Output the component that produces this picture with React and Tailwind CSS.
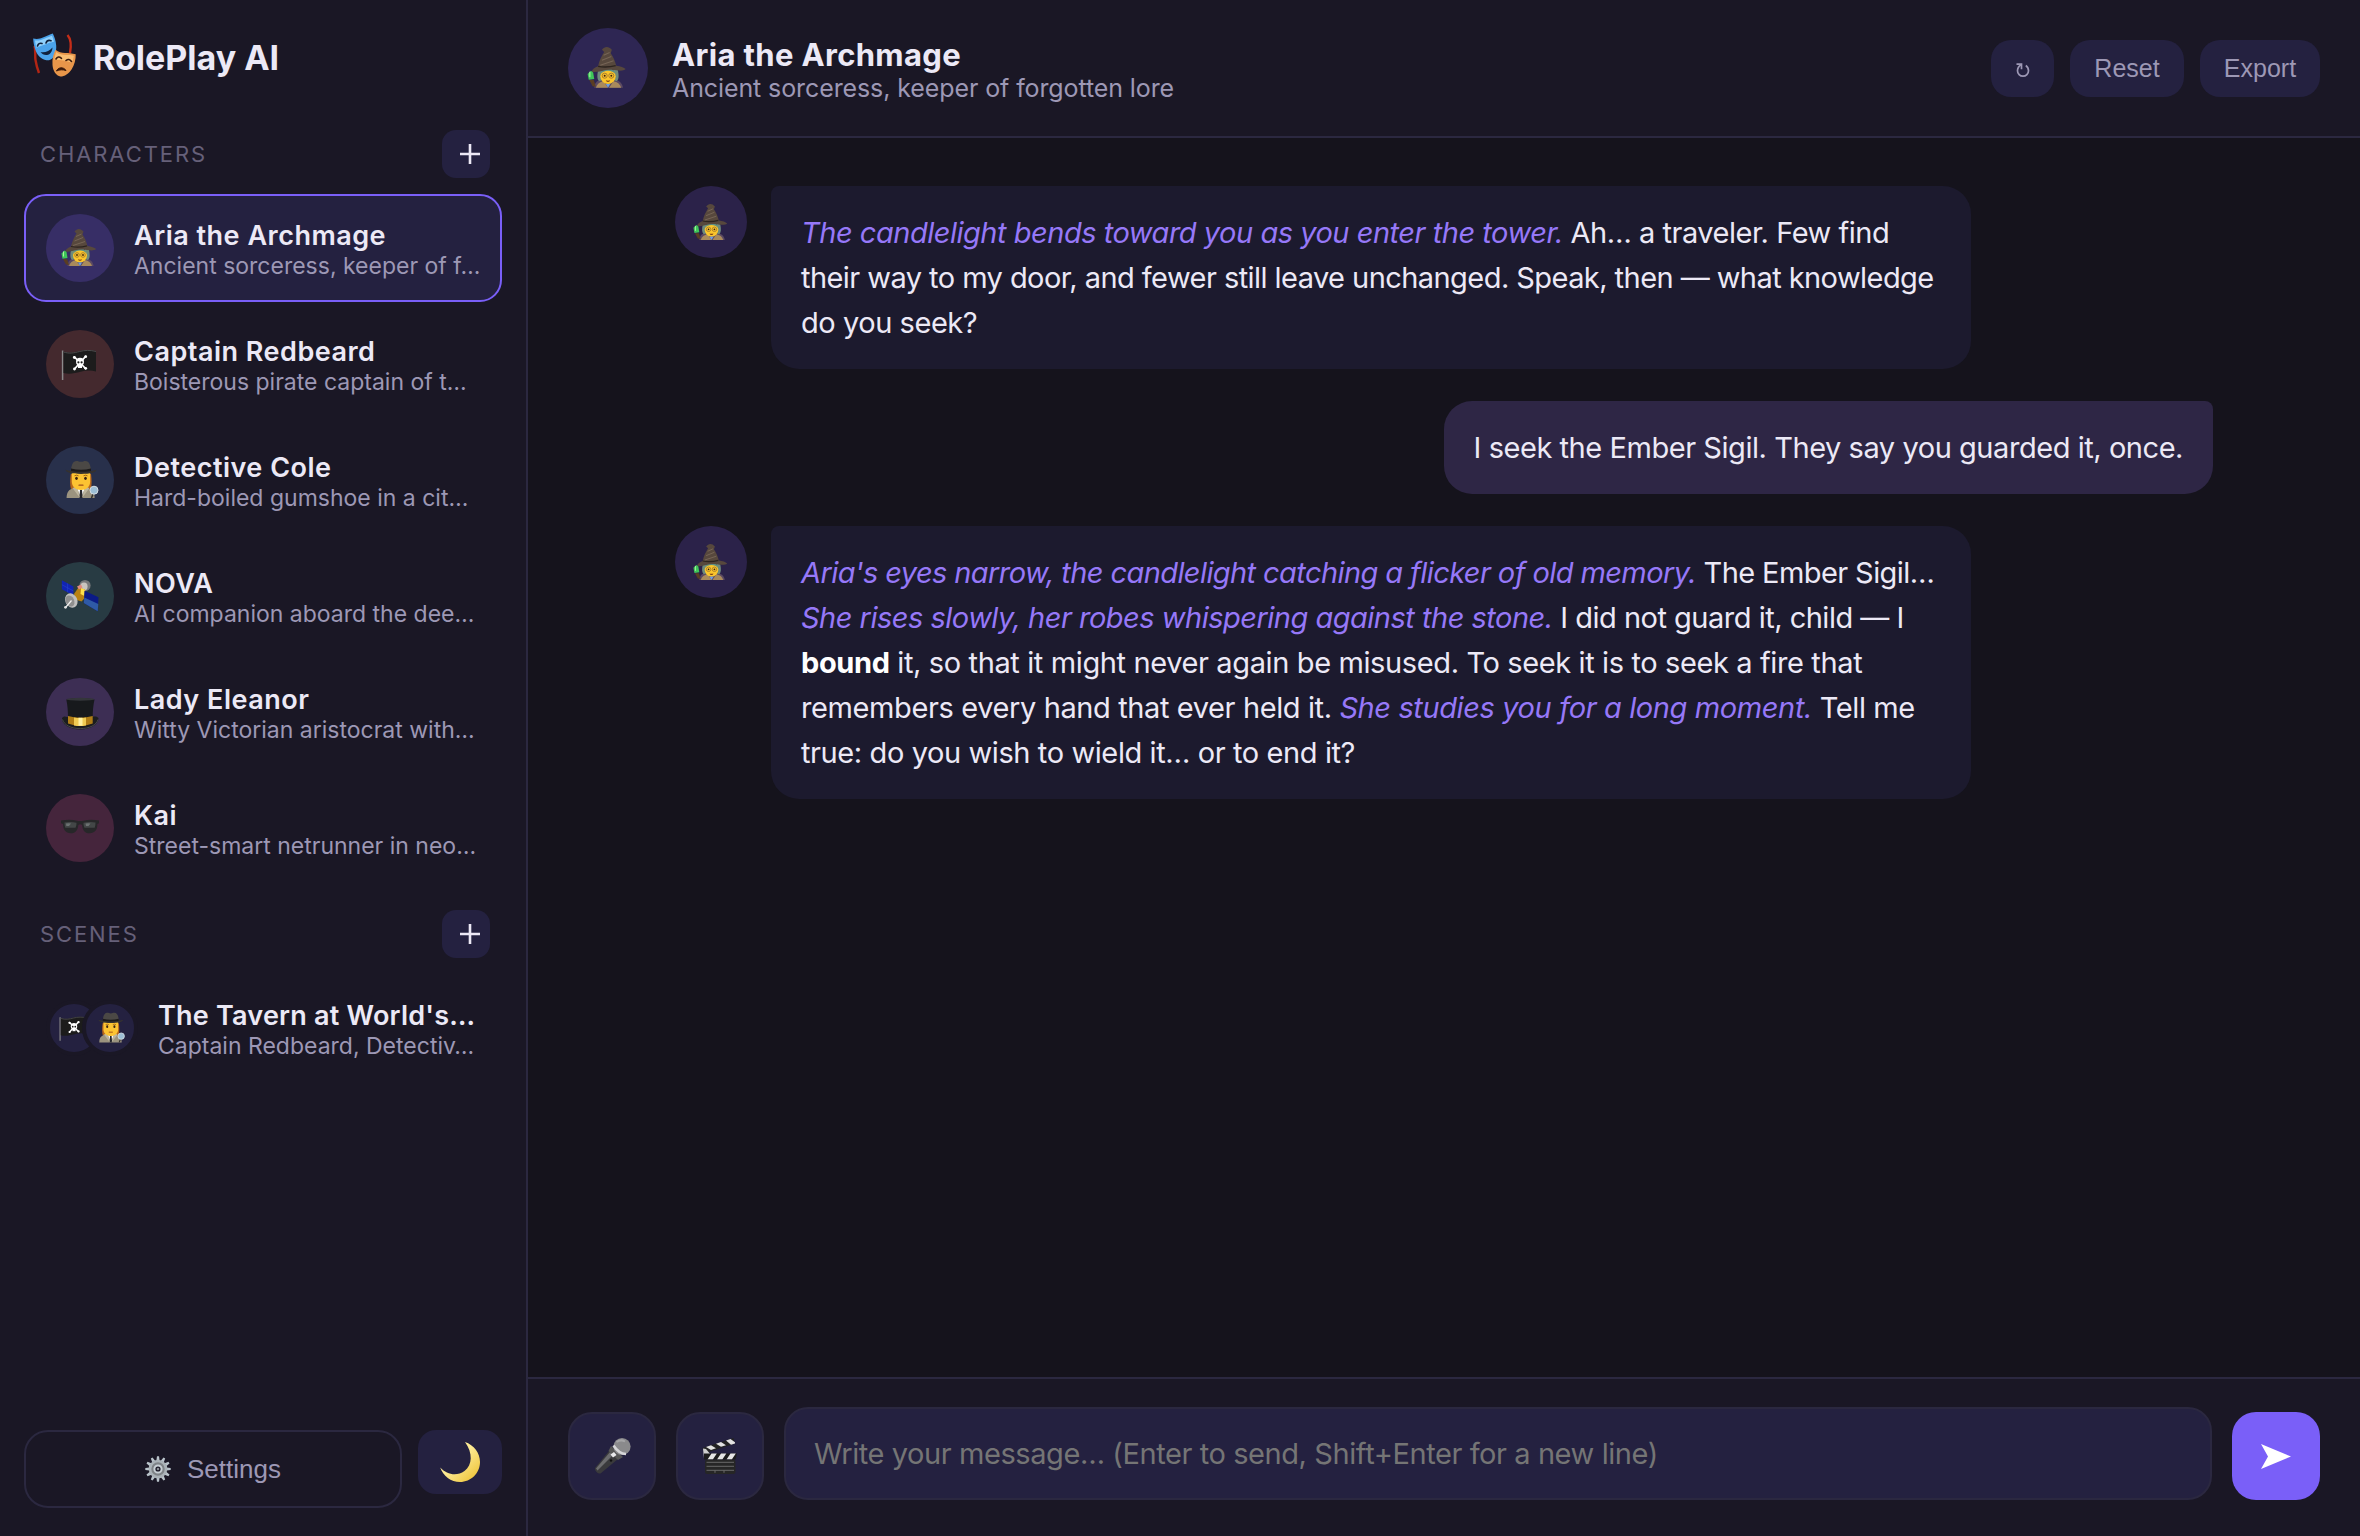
import React from 'react';
import clsx from 'clsx';

function Wizard({ className }) {
    return (
        <svg viewBox="0 0 40 40" className={className}>
            <path d="M7.500 38c.4-5 3-7.200 7-7.600h10.500c5 .6 8 3 8.600 7.600z" fill="#5b4a63" />
            <path d="M9 38c1-3.500 3.500-5.500 7-6l4 6zM32 38c-1-3.500-3.500-5.500-7-6l-4 6z" fill="#a98a5c" />
            <path d="M11 22c-1 5-1 8 1 10l3-1V21zM29 22c1 5 1 8-1 10l-3-1V21z" fill="#6f8b7b" />
            <circle cx="20" cy="27.500" r="7" fill="#fbc62b" />
            <path d="M13 26c1-4 4-6 7-6s6 2 7 6c-2-2.500-4-3.500-7-3.500s-5 1-7 3.500z" fill="#5d8f85" />
            <g fill="none" stroke="#a0742c" strokeWidth=".8">
                <circle cx="17" cy="27" r="2.300" />
                <circle cx="23" cy="27" r="2.300" />
            </g>
            <circle cx="17" cy="27" r=".9" fill="#3b2410" />
            <circle cx="23" cy="27" r=".9" fill="#3b2410" />
            <path d="M18 31.200q2 .9 4 0q-.4 1.600-2 1.600t-2-1.600z" fill="#7d3f12" />
            <path d="M18 34.500h4l-2 3.500z" fill="#6f9fe0" />
            <path d="M14.500 3.500C17 .2 20.500 0 23.500 3.500l-1 3c2.500 3.500 4 7.500 5 11.500 4 .5 7 1.500 8.600 3-3 2.500-7 1-13 .6-7-.4-12 3-18 1.900C5.500 21.500 8 19.500 11 18.500c1-5 3-9 5.500-13z" fill="#57483d" />
            <path d="M16 8.500l5.500-2.500M14.500 13l8.500-3.500M13 17.500l12-4" stroke="#766556" strokeWidth="1" />
            <path d="M11 18.500q8 1.500 16-.7" stroke="#2d241e" strokeWidth="1.200" fill="none" />
            <path d="M4.500 22.500l2 1.500 1 6-5 .7-1-5.200z" fill="#3fc659" />
            <path d="M3.500 23.500v5" stroke="#a7f3a0" strokeWidth="1" />
            <path d="M3 31h4l2 6-3-.5z" fill="#5a3d22" />
        </svg>
    );
}

function PirateFlag({ className }) {
    return (
        <svg viewBox="0 0 40 40" className={className}>
            <path d="M2.600 6.500V36" stroke="#8b8b8b" strokeWidth="1.500" />
            <path d="M3.500 7.500c6 2 11 .8 16-.5s11-1.600 16.500 0v20.500c-5-1.600-10-1.300-15.500.2S9.500 30.500 3.500 29z" fill="#1c1c1c" />
            <path d="M3.500 8c6 2 11 .8 16-.5s11-1.600 16.500 0" stroke="#4b4b4b" strokeWidth="1" fill="none" />
            <path d="M14.500 13l11 11.500M25.500 12.500L14.500 25" stroke="#fff" strokeWidth="1.800" strokeLinecap="round" />
            <g fill="#fff">
                <circle cx="14.300" cy="13.500" r="1.400" />
                <circle cx="25.700" cy="12.700" r="1.400" />
                <circle cx="14.500" cy="25" r="1.400" />
                <circle cx="25.700" cy="24.300" r="1.400" />
                <ellipse cx="20" cy="17.800" rx="4" ry="4" />
                <path d="M18 21h4v3h-4z" />
            </g>
            <circle cx="18.400" cy="18.300" r="1.100" fill="#1c1c1c" />
            <circle cx="21.600" cy="18.300" r="1.100" fill="#1c1c1c" />
        </svg>
    );
}

function Detective({ className }) {
    return (
        <svg viewBox="0 0 40 40" className={className}>
            <path d="M10.800 14c-1 6-.8 11 0 14.500L15 31h12l4-2.500c.8-4 .8-9 0-14.500z" fill="#b5651d" />
            <path d="M6.600 38c0-5.500 2-8.500 7-10h14c5 1.500 7 4.500 7 10z" fill="#9b937f" />
            <path d="M17 28h8l-4 10z" fill="#fff" />
            <path d="M20 30h2l.7 8h-3.400z" fill="#26262c" />
            <path d="M12.500 28l4.500-1.500 3 11.500zM29.500 28L25 26.500 22 38z" fill="#bdb59e" />
            <path d="M11.800 12h18.400v9.500c0 5-4 8.500-9.200 8.500s-9.200-3.500-9.200-8.500z" fill="#fcc332" />
            <ellipse cx="16.500" cy="18.300" rx="1.300" ry="1.600" fill="#3a2412" />
            <ellipse cx="25.500" cy="18.300" rx="1.300" ry="1.600" fill="#3a2412" />
            <path d="M14.500 15.800q2-1.200 4 0M23.500 15.800q2-1.200 4 0" stroke="#8b4c12" strokeWidth=".8" fill="none" />
            <path d="M19 25.200h4" stroke="#a0521a" strokeWidth="1.200" strokeLinecap="round" />
            <path d="M11 11c.2-6 2-10 5.500-10 2 0 2.500.8 4.500.8s2.500-.8 4.500-.8c3.500 0 5.300 4 5.500 10z" fill="#4b4845" />
            <path d="M11 8.500q10 2.500 20 0v3.500q-10 2-20 0z" fill="#1d1b1b" />
            <path d="M5.600 9.800c4 1.500 9 2 15.400 2s11.400-.5 15.400-2c-.5 3-6 4.100-15.400 4.100S6 12.800 5.600 9.800z" fill="#35322f" />
            <path d="M33 34l-1.500 4" stroke="#35322f" strokeWidth="1.500" />
            <circle cx="34" cy="30.200" r="4" fill="#9dbfd6" stroke="#d5dde2" strokeWidth="1" />
        </svg>
    );
}

function Satellite({ className }) {
    return (
        <svg viewBox="0 0 40 40" className={className}>
            <circle cx="25" cy="9.500" r="5.600" fill="#77797b" />
            <ellipse cx="24" cy="10.500" rx="3.600" ry="4" fill="#c9c5bf" />
            <path d="M1.900 4.200l11.500 6.300v9L1.900 13.300z" fill="#1124b4" />
            <path d="M1.900 8.700l11.500 6.300M7.600 7.400v9" stroke="#2d4bd0" strokeWidth=".5" />
            <path d="M14 18l4.500-6.500 6.500 2 1 7-4.500 5-6-2z" fill="#b98212" />
            <path d="M21 12l4 1.700-1 6-3.500-1.700z" fill="#ffe04a" />
            <path d="M17 10.500l4-2 1.500 3-3.500 2z" fill="#e08a80" />
            <path d="M24.500 14.700l14 6.600-.8 14L23.800 27z" fill="#0b1a86" />
            <path d="M24.300 21.500l14 6.500-.6 7.300-13.900-8.300z" fill="#2f5aa6" />
            <ellipse cx="11.300" cy="24.500" rx="6" ry="7.500" transform="rotate(-25 11.300 24.500)" fill="#bfbfbf" />
            <ellipse cx="10" cy="25" rx="4.200" ry="5.800" transform="rotate(-25 10 25)" fill="#8f8f8f" />
            <path d="M11.500 24.500l-6 7" stroke="#f3f3f3" strokeWidth="1.200" />
            <circle cx="5.500" cy="31.300" r="1.400" fill="#dedede" />
        </svg>
    );
}

function TopHat({ className }) {
    return (
        <svg viewBox="0 0 40 40" className={className}>
            <path d="M2 26c1-1.500 3-2 5-1l26-.2c2-.8 4.500-.3 5.500 1.200C39 32 31 37.500 20.300 37.500S1 32 2 26z" fill="#1c1d1f" />
            <path d="M2.500 27.500C4 33 11 36.600 20.300 36.600S36.500 33 38 27.500" stroke="#505254" strokeWidth=".8" fill="none" />
            <path d="M6.300 7.500Q20 5 34.500 7.500c-1.300 6-1.800 12-1.800 18H8c0-6-.4-12-1.700-18z" fill="#17191c" />
            <ellipse cx="20.400" cy="7.300" rx="14" ry="1.500" fill="#34363a" />
            <path d="M8 24q12.300 3.500 24.700 0v7.500Q20.300 36 8 31.500z" fill="#b07d16" />
            <path d="M14 25.400q6 1 12 0v8q-6 1-12 0z" fill="#f0cb52" />
            <path d="M18.500 25.700h4v8h-4z" fill="#fff0a0" />
        </svg>
    );
}

function Shades({ className }) {
    return (
        <svg viewBox="0 0 40 40" className={className}>
            <path d="M1 12.500q9-1.500 16 .2 3.200.8 6.400 0 7-1.700 15.600-.2v2.800l-1.600.8c0 6-2.500 9.200-7.900 9.200-5 0-7-3.300-7.400-8.300q-1.900-1.400-3.800 0c-.4 5-2.600 8.300-7.400 8.300-5.400 0-7.700-3.200-7.900-9.200L1 15.300z" fill="#272729" />
            <path d="M4.500 14.500q6-1 12 .3c0 2-.3 3.500-1 5H5.300c-.6-1.600-.8-3.300-.8-5.300zM23.500 14.800q6-1.300 12-.3c0 2-.2 3.700-.8 5.300H24.500c-.7-1.500-1-3-1-5z" fill="#434747" />
            <path d="M6 15.500q3-.6 5 0l-2 2.500H6.300zM25.500 15.500q3-.6 5 0l-2 2.500H26z" fill="#6c7272" />
        </svg>
    );
}

function Masks({ className }) {
    return (
        <svg viewBox="0 0 44 44" className={className}>
            <path d="M1.500 13c1.500 5 .2 9 1 14s1.500 8 3.500 13" stroke="#b32514" strokeWidth="2.400" fill="none" />
            <path d="M34.500 2c3.500 4 4 10 2.500 18" stroke="#c42d18" strokeWidth="2.400" fill="none" />
            <path d="M.2 5.500C4 6.300 7 5.800 10.500 4.300S17 1.500 19.800.5c1.500 3 3 7 3.400 12 .5 7-2.200 13.500-7.200 14.800C10.500 27.500 5.500 24.500 3 18.500 1.200 14 .3 9.500.2 5.500z" fill="#4ba3ea" />
            <path d="M2 7.500c4 .3 7-.7 10-2s5-2 7-2.700c1 2 1.500 4 2 6-6 1-12 4-17.500 6-.8-2.500-1.300-5-1.500-7.300z" fill="#8fd0fb" />
            <path d="M4.500 13q1-3.500 4.500-2.500M13 10q1.200-3.500 5-2.300" stroke="#10223d" strokeWidth="1.600" fill="none" strokeLinecap="round" />
            <path d="M7.500 19c4.500.8 9-.8 12-4.500-.2 4-2.200 7-5.500 7.500-2.800.3-5-1-6.500-3z" fill="#10223d" />
            <path d="M22.500 16.800c3 2.300 6 3.200 9.500 3.200s7 .3 10.700 1.200c.2 5-1.200 10.500-4 15S31.500 43.500 27.500 43.500c-4.500-1-7.500-5.500-8-11.500-.4-5.500.8-11 3-15.200z" fill="#e8964a" />
            <path d="M23.300 19c3 2.300 6 3 9.500 3s5 0 8 .8c-.3 3-1 5-2 7-5-2-11-3-17.500-3 .3-3 1-5.500 2-7.800z" fill="#f9bd72" />
            <path d="M23 26q2-3.500 5.500-.7M33 27.500q3-2.500 5.500 1" stroke="#3b1a0b" strokeWidth="1.600" fill="none" strokeLinecap="round" />
            <path d="M23.500 38c1.500-3.800 7-4.500 9.500-.5-3-1-6.500-1-9.500.5z" fill="#3b1a0b" stroke="#3b1a0b" strokeWidth="1" strokeLinejoin="round" />
        </svg>
    );
}

const teeth = [0, 30, 60, 90, 120, 150, 180, 210, 240, 270, 300, 330];

function Gear({ className }) {
    return (
        <svg viewBox="0 0 26 26" className={className}>
            {teeth.map((deg) => (
                <path key={deg} d="M11.400 4.500l.6-4.200h2l.6 4.200z" fill="#b9c3ca" transform={`rotate(${deg} 13 13)`} />
            ))}
            <circle cx="13" cy="13" r="8" fill="#7f8488" stroke="#aab2b7" strokeWidth="2.600" />
            <circle cx="13" cy="13" r="3.600" fill="#1a1725" stroke="#c8d0d5" strokeWidth="2" />
            <circle cx="13" cy="13" r="1.300" fill="#8a8f94" />
        </svg>
    );
}

function Moon({ className }) {
    return (
        <svg viewBox="0 0 40 40" className={className}>
            <defs>
                <linearGradient id="moon" x1="0" y1="0" x2="1" y2="1">
                    <stop offset=".45" stopColor="#fdea94" />
                    <stop offset=".85" stopColor="#f0c945" />
                </linearGradient>
            </defs>
            <path d="M25 0C34 3 40 11 40 20c0 11-9 20-20 20C11 40 3 34 .2 25.500c6.800 7.500 16.800 9 24.300 3.500C32.500 23 33 11 25 0z" fill="url(#moon)" />
        </svg>
    );
}

function Mic({ className }) {
    return (
        <svg viewBox="0 0 40 40" className={className}>
            <path d="M17.500 14.500l8.500 8.500L8.500 37.500Q6.500 38 4.500 36T3 32z" fill="#3a3a3c" />
            <path d="M18.500 15.500l3 3L5.500 34.500l-1.500-2z" fill="#6c6c6e" />
            <path d="M19 10l12 11-5 3-9.500-9z" fill="#555" />
            <circle cx="30" cy="10.500" r="8.600" fill="#8a8a8c" />
            <path d="M21.500 9.500Q27 18 34 18" stroke="#d6d6d8" strokeWidth="2.600" fill="none" />
            <path d="M24.500 6Q29 3 33 5.500" stroke="#a5a5a7" strokeWidth="2" fill="none" />
            <path d="M18.500 18.500l3.500-2.500 2.500 3-3.500 2.500z" fill="#e8e8ea" />
            <circle cx="19" cy="24.500" r="1.200" fill="#111" />
        </svg>
    );
}

function Clapper({ className }) {
    return (
        <svg viewBox="0 0 40 40" className={className}>
            <path d="M2.500 12L33.500 2l1.500 5.500L4.500 17.500z" fill="#232323" />
            <path d="M6 11l5-1.700 5 3-5 1.700zM16 7.700l5-1.700 5 3.300-5 1.500zM26 4.500l4.500-1.500 4.500 3.200v1.300l-4 1.200z" fill="#e2e2e2" />
            <path d="M3 12.500l3 .5 5 6-7 3.500z" fill="#cfcfcf" />
            <path d="M4 17.500h33l-1.500 6H4z" fill="#1b1b1b" />
            <path d="M11.500 17.500h5.300l-4 6H7.500zM21 17.500h5.300l-4 6H17zM30.500 17.500h5.300l-4 6h-5.300z" fill="#e6e6e6" />
            <rect x="5" y="23.500" width="30.500" height="14.500" rx="2" fill="#262626" />
            <path d="M6.500 26.300h27.500M6.500 30.300h27.500M6.500 34.300h27.500M15 34.300v2.500M24 34.300v2.500" stroke="#6a6a6a" strokeWidth="1" />
        </svg>
    );
}

const characters = [
    { name: 'Aria the Archmage', tagline: 'Ancient sorceress, keeper of f…', Icon: Wizard, color: 'bg-[#372e66]', active: true },
    { name: 'Captain Redbeard', tagline: 'Boisterous pirate captain of t…', Icon: PirateFlag, color: 'bg-[#44292e]' },
    { name: 'Detective Cole', tagline: 'Hard-boiled gumshoe in a cit…', Icon: Detective, color: 'bg-[#28304b]' },
    { name: 'NOVA', tagline: 'AI companion aboard the dee…', Icon: Satellite, color: 'bg-[#283b43]' },
    { name: 'Lady Eleanor', tagline: 'Witty Victorian aristocrat with…', Icon: TopHat, color: 'bg-[#3d2e54]' },
    { name: 'Kai', tagline: 'Street-smart netrunner in neo…', Icon: Shades, color: 'bg-[#45253c]' },
];

function SectionHeader({ title }) {
    return (
        <div className="flex h-12 items-center justify-between pr-3 pl-4">
            <h2 className="text-[22px] tracking-[1.9px] text-[#666079] uppercase">{title}</h2>
            <button className="flex size-12 items-center justify-center rounded-[14px] bg-[#242140] pl-2">
                <svg viewBox="0 0 20 20" className="size-5" stroke="#ece9f6" strokeWidth="2.600">
                    <path d="M10 0v20M0 10h20" />
                </svg>
            </button>
        </div>
    );
}

function CardText({ name, tagline, tracking = 'tracking-[0.5px]' }) {
    return (
        <div className="pt-0.5 whitespace-nowrap">
            <p className={clsx('text-[27px] leading-[34px] font-semibold text-[#ece9f6]', tracking)}>{name}</p>
            <p className="text-[23px] leading-[26px] text-[#9d98b5]">{tagline}</p>
        </div>
    );
}

function Sidebar() {
    return (
        <aside className="flex w-[528px] shrink-0 flex-col border-r-2 border-[#2b2840] bg-[#1a1725] px-6 pb-7">
            <div className="mb-5 flex h-[110px] items-center gap-4 pl-[9px]">
                <Masks className="size-11" />
                <h1 className="pt-1 text-[34px] font-bold text-[#ece9f6]">RolePlay AI</h1>
            </div>
            <SectionHeader title="Characters" />
            <div className="mt-4 mb-7 flex flex-col gap-2">
                {characters.map(({ name, tagline, Icon, color, active }) => (
                    <div
                        key={name}
                        className={clsx(
                            'flex h-[108px] items-center gap-5 rounded-[22px] border-2 px-5',
                            active ? 'border-[#7a5ff8] bg-[#242140]' : 'border-transparent'
                        )}
                    >
                        <div className={clsx('flex size-[68px] shrink-0 items-center justify-center rounded-full', color)}>
                            <Icon className="size-10" />
                        </div>
                        <CardText name={name} tagline={tagline} />
                    </div>
                ))}
            </div>
            <SectionHeader title="Scenes" />
            <div className="mt-4 flex h-[108px] items-center gap-5 pl-[22px]">
                <div className="flex shrink-0 -space-x-5">
                    <div className="flex size-14 items-center justify-center rounded-full border-4 border-[#1a1725] bg-[#242140]">
                        <PirateFlag className="size-8" />
                    </div>
                    <div className="flex size-14 items-center justify-center rounded-full border-4 border-[#1a1725] bg-[#242140]">
                        <Detective className="size-8" />
                    </div>
                </div>
                <CardText name="The Tavern at World's…" tagline="Captain Redbeard, Detectiv…" tracking="tracking-[0.22px]" />
            </div>
            <div className="mt-auto flex items-start gap-4">
                <button className="flex h-[78px] w-[378px] items-center justify-center gap-4 rounded-[24px] border-2 border-[#2b2840] font-['Liberation_Sans',sans-serif] text-[26px] text-[#9d98b5]">
                    <Gear className="size-[26px]" />
                    Settings
                </button>
                <button className="flex h-16 w-[84px] items-center justify-center rounded-[18px] bg-[#242140]">
                    <Moon className="size-10" />
                </button>
            </div>
        </aside>
    );
}

function ChatHeader() {
    return (
        <header className="flex h-[138px] shrink-0 items-center border-b-2 border-[#2b2840] bg-[#1a1725] px-10">
            <div className="flex size-20 items-center justify-center rounded-full bg-[#2e2653]">
                <Wizard className="size-11" />
            </div>
            <div className="ml-6 pt-px whitespace-nowrap">
                <p className="text-[31px] leading-[39px] font-bold tracking-[0.35px] text-[#ece9f6]">Aria the Archmage</p>
                <p className="text-[25px] leading-7 tracking-[-0.1px] text-[#9d98b5]">Ancient sorceress, keeper of forgotten lore</p>
            </div>
            <div className="ml-auto flex gap-4 font-['Liberation_Sans',sans-serif] text-[25px] text-[#9d98b5]">
                <button className="flex h-[57px] w-[63px] items-center justify-center rounded-[20px] bg-[#242140] pt-1">
                    <svg viewBox="0 0 14 16" className="h-4 w-3.5" fill="none" stroke="#9d98b5" strokeWidth="1.700">
                        <path d="M.5 2.200h5v5M5.300 2.400C2.600 4 1.500 6 1.500 8.700a5.500 5.500 0 0 0 11 0c0-2.300-1-4-2.700-5.200" />
                    </svg>
                </button>
                <button className="h-[57px] w-[114px] rounded-[20px] bg-[#242140] pt-0.5">Reset</button>
                <button className="h-[57px] w-[120px] rounded-[20px] bg-[#242140] pt-0.5">Export</button>
            </div>
        </header>
    );
}

function Action({ children }) {
    return <em className="text-[#9678f8]">{children}</em>;
}

function BotMessage({ children }) {
    return (
        <div className="flex items-start gap-6">
            <div className="flex size-[72px] shrink-0 items-center justify-center rounded-full bg-[#2b2249]">
                <Wizard className="size-[39px]" />
            </div>
            <div className="w-[1200px] rounded-[28px] rounded-tl-lg bg-[#1c1a2e] px-[30px] py-6 whitespace-nowrap">{children}</div>
        </div>
    );
}

function Messages() {
    return (
        <div className="mx-auto flex w-[1538px] grow flex-col gap-8 pt-12 text-[29px] leading-[45px] tracking-[-0.45px] text-[#ece9f6]">
            <BotMessage>
                <p className="tracking-[-0.48px]">
                    <Action>The candlelight bends toward you as you enter the tower.</Action> Ah… a traveler. Few find
                </p>
                <p className="tracking-[-0.56px]">their way to my door, and fewer still leave unchanged. Speak, then — what knowledge</p>
                <p>do you seek?</p>
            </BotMessage>
            <div className="self-end rounded-[28px] rounded-tr-lg bg-[#2e2645] px-[30px] py-6">
                I seek the Ember Sigil. They say you guarded it, once.
            </div>
            <BotMessage>
                <p className="tracking-[-0.59px]">
                    <Action>Aria's eyes narrow, the candlelight catching a flicker of old memory.</Action> The Ember Sigil…
                </p>
                <p className="tracking-[-0.5px]">
                    <Action>She rises slowly, her robes whispering against the stone.</Action> I did not guard it, child — I
                </p>
                <p className="tracking-[-0.38px]">
                    <strong className="font-bold text-white">bound</strong> it, so that it might never again be misused. To
                    seek it is to seek a fire that
                </p>
                <p className="tracking-[-0.39px]">
                    remembers every hand that ever held it. <Action>She studies you for a long moment.</Action> Tell me
                </p>
                <p className="tracking-[-0.4px]">true: do you wish to wield it… or to end it?</p>
            </BotMessage>
        </div>
    );
}

function Composer() {
    return (
        <footer className="flex h-[159px] shrink-0 items-end gap-5 border-t-2 border-[#2b2840] bg-[#1a1725] px-10 pb-9">
            <button className="flex size-[88px] shrink-0 items-center justify-center rounded-[24px] border-2 border-[#2b2840] bg-[#242140]">
                <Mic className="size-10" />
            </button>
            <button className="flex size-[88px] shrink-0 items-center justify-center rounded-[24px] border-2 border-[#2b2840] bg-[#242140]">
                <Clapper className="size-10" />
            </button>
            <div className="flex h-[93px] grow items-center rounded-[24px] border-2 border-[#2b2840] bg-[#242140] pl-7 text-[29px] tracking-[-0.42px] text-[#757575]">
                Write your message… (Enter to send, Shift+Enter for a new line)
            </div>
            <button className="flex size-[88px] shrink-0 items-center justify-center rounded-[24px] bg-[#7a5ff8]">
                <svg viewBox="0 0 30 25" className="h-[25px] w-[30px]" fill="#fff">
                    <path d="M0 0l30 12.500L0 25l7-12.500z" />
                </svg>
            </button>
        </footer>
    );
}

export default function App() {
    return (
        <div className="flex h-[1536px] w-[2360px] overflow-hidden bg-[#15131c] font-['Inter',sans-serif]">
            <Sidebar />
            <main className="flex grow flex-col">
                <ChatHeader />
                <Messages />
                <Composer />
            </main>
        </div>
    );
}
